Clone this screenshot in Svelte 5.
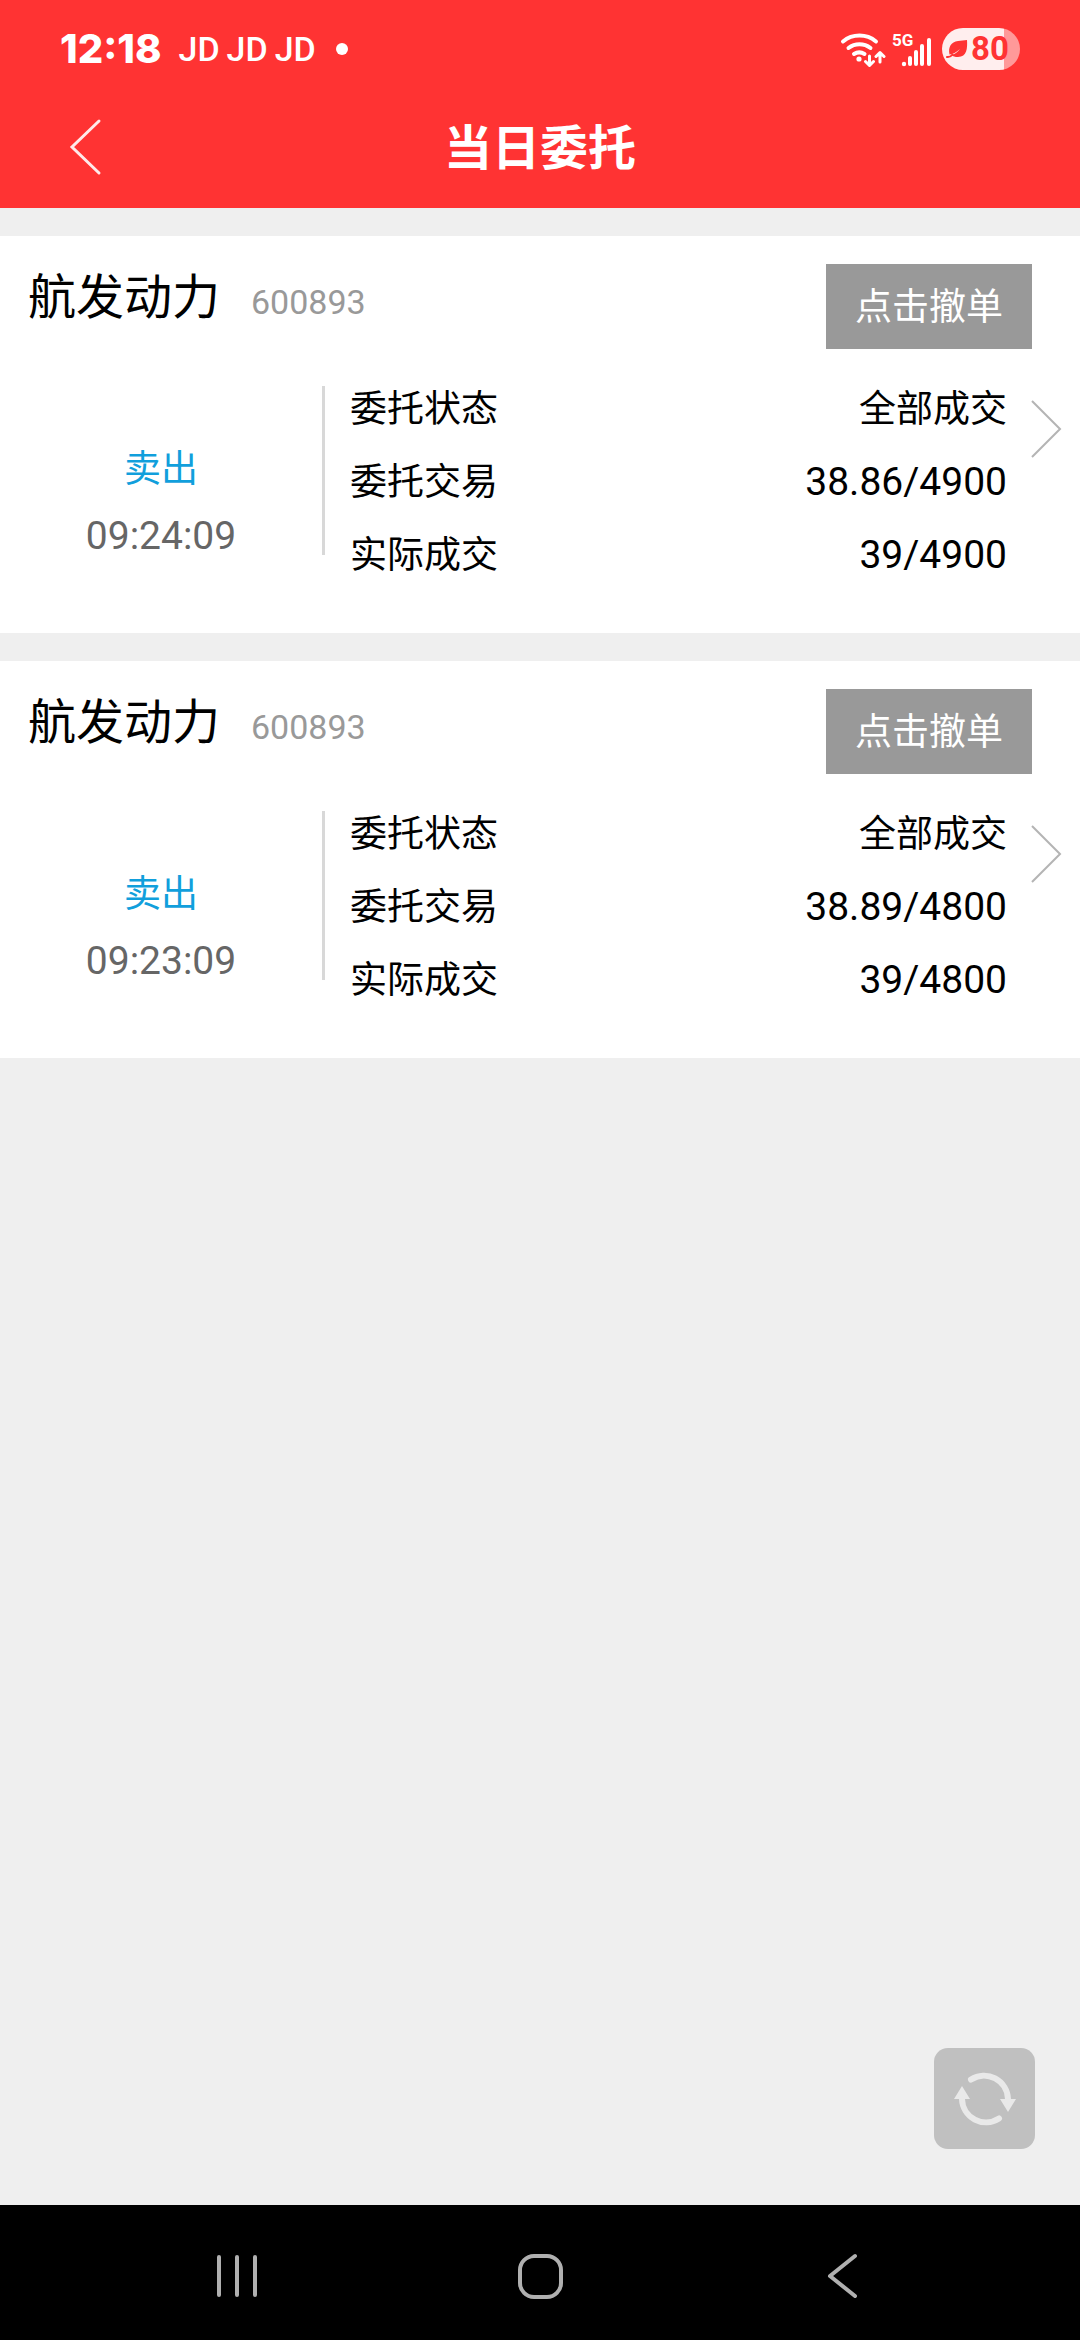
<script>
  const orders = [
    { name: '航发动力', code: '600893', side: '卖出', time: '09:24:09', status: '全部成交', ordered: '38.86/4900', filled: '39/4900' },
    { name: '航发动力', code: '600893', side: '卖出', time: '09:23:09', status: '全部成交', ordered: '38.89/4800', filled: '39/4800' }
  ];
  const notices = [1, 2, 3];
</script>

<div class="screen">
  <header>
    <div class="status">
      <span class="clock">12:18</span>
      <span class="notices">
        {#each notices as n (n)}<span>JD</span>{/each}
      </span>
      <span class="dot"></span>
      <div class="indicators">
        <svg class="wifi" width="46" height="42" viewBox="0 0 46 42" fill="none" stroke="#fff" stroke-width="4" stroke-linecap="round" aria-hidden="true">
          <path d="M3 13.500a26 26 0 0 1 33 0M8.500 20a18 18 0 0 1 22 0M14 26a10 10 0 0 1 10.500 0" />
          <circle cx="19" cy="31" r="2.600" fill="#fff" stroke="none" />
          <path d="M29.500 28v9M25.500 33.500l4 4 4-4M40 34v-9M36 28.500l4-4 4 4" stroke-width="3" stroke-linejoin="round" />
        </svg>
        <div class="signal">
          <span class="network">5G</span>
          <svg width="32" height="30" viewBox="0 0 32 30" fill="#fff" aria-hidden="true">
            <circle cx="4" cy="27" r="2.200" />
            <rect x="8" y="19" width="4" height="10" rx="2" />
            <rect x="14" y="13" width="4" height="16" rx="2" />
            <rect x="20" y="7" width="4" height="22" rx="2" />
            <rect x="27" y="1" width="4" height="28" rx="2" />
          </svg>
        </div>
        <div class="battery">
          <svg width="22" height="20" viewBox="0 0 22 20" aria-hidden="true">
            <path d="M21 1c.5 8 0 17-9 17-3 0-5-.6-6.500-2 3-.8 6-2.500 8.500-6-4 3.500-7 5-10.500 5.500C2 8 5 3 12 2c3-.5 6-.4 9-1z" fill="#f33" />
            <path d="M1 18c2 .4 4-.6 5.500-2.500" fill="none" stroke="#f33" stroke-width="2" stroke-linecap="round" />
          </svg>
          <span>80</span>
        </div>
      </div>
    </div>
    <div class="titlebar">
      <button class="back" aria-label="返回">
        <svg width="34" height="60" viewBox="0 0 34 60" fill="none" stroke="#ffeaea" stroke-width="3" stroke-linecap="round" aria-hidden="true">
          <path d="M31 4L4 30 31 56" />
        </svg>
      </button>
      <h1>当日委托</h1>
    </div>
  </header>

  <main>
    {#each orders as order (order.time)}
      <article>
        <div class="head">
          <h2>{order.name}</h2>
          <span class="code">{order.code}</span>
          <button class="cancel">点击撤单</button>
        </div>
        <div class="body">
          <div class="trade">
            <span class="side">{order.side}</span>
            <time>{order.time}</time>
          </div>
          <dl>
            <div><dt>委托状态</dt><dd class="cjk">{order.status}</dd></div>
            <div><dt>委托交易</dt><dd>{order.ordered}</dd></div>
            <div><dt>实际成交</dt><dd>{order.filled}</dd></div>
          </dl>
          <button class="more" aria-label="查看详情">
            <svg width="32" height="58" viewBox="0 0 32 58" fill="none" stroke="#b4b4b4" stroke-width="2" aria-hidden="true">
              <path d="M2 1l28 28L2 57" />
            </svg>
          </button>
        </div>
      </article>
    {/each}
    <button class="refresh" aria-label="刷新">
      <svg width="64" height="56" viewBox="0 0 64 56" fill="none" stroke="#e9e9e9" stroke-width="6" stroke-linecap="round" aria-hidden="true">
        <path d="M18 8.500A24 24 0 0 1 55 28M46 47.500A24 24 0 0 1 9 28" />
        <path d="M47 28h16l-8 13zM1 28h16L9 15z" fill="#e9e9e9" stroke="none" />
      </svg>
    </button>
  </main>

  <nav>
    <button aria-label="最近任务">
      <svg width="48" height="48" viewBox="0 0 48 48" stroke="#b0b0b0" stroke-width="4" stroke-linecap="round" aria-hidden="true">
        <path d="M6 5v38M24 5v38M42 5v38" />
      </svg>
    </button>
    <button aria-label="主屏幕">
      <svg width="48" height="48" viewBox="0 0 48 48" fill="none" stroke="#b0b0b0" stroke-width="4" aria-hidden="true">
        <rect x="4" y="4" width="41" height="41" rx="14" />
      </svg>
    </button>
    <button aria-label="返回上一页">
      <svg width="48" height="48" viewBox="0 0 48 48" fill="none" stroke="#b0b0b0" stroke-width="4" stroke-linecap="round" stroke-linejoin="round" aria-hidden="true">
        <path d="M36 4L11 24l25 20" />
      </svg>
    </button>
  </nav>
</div>

<style>
  :global(body) {
    margin: 0;
  }
  .screen {
    display: flex;
    flex-direction: column;
    min-height: 100vh;
    background: #efefef;
    color: #000;
    font-family: Roboto, 'Noto Sans CJK SC', sans-serif;
    font-size: 37px;
  }
  svg {
    display: block;
    flex: none;
  }
  button {
    display: flex;
    align-items: center;
    justify-content: center;
    padding: 0;
    border: 0;
    background: none;
    color: inherit;
    font: inherit;
  }
  header {
    background: #f33;
    color: #fff;
  }
  .status {
    display: flex;
    align-items: center;
    box-sizing: border-box;
    height: 86px;
    padding: 12px 60px 0;
  }
  .clock {
    font: 800 40px/40px Inter, sans-serif;
  }
  .notices {
    display: flex;
    gap: 7px;
    margin-left: 17px;
    font: 500 34px/40px Roboto, sans-serif;
  }
  .dot {
    width: 12px;
    height: 12px;
    margin-left: 20px;
    border-radius: 50%;
    background: #fff;
  }
  .indicators {
    display: flex;
    align-items: center;
    margin-left: auto;
  }
  .signal {
    display: flex;
    align-items: flex-end;
    position: relative;
    height: 40px;
    margin-left: 14px;
    padding-bottom: 2px;
    box-sizing: border-box;
  }
  .network {
    position: absolute;
    left: -8px;
    top: 2px;
    font: 700 17px/18px Roboto, sans-serif;
  }
  .battery {
    display: flex;
    align-items: center;
    box-sizing: border-box;
    width: 78px;
    height: 42px;
    margin-left: 10px;
    padding-left: 4px;
    gap: 3px;
    border-radius: 21px;
    background: linear-gradient(90deg, #fee 80%, #f99 80%);
    color: #f33;
    font: 700 33px/42px Roboto, sans-serif;
  }
  .titlebar {
    display: grid;
    grid-template-columns: 1fr auto 1fr;
    align-items: center;
    height: 122px;
  }
  .back {
    justify-self: start;
    margin-left: 68px;
  }
  h1,
  h2 {
    margin: 0;
    font-size: 48px;
    line-height: 68px;
  }
  h1 {
    padding-top: 4px;
    font-weight: 700;
  }
  h2 {
    font-weight: 400;
  }
  main {
    display: flex;
    flex: 1;
    flex-direction: column;
    gap: 28px;
    padding: 28px 0 56px;
  }
  article {
    padding: 28px 0 41px;
    background: #fff;
  }
  .head {
    display: flex;
    align-items: flex-start;
    padding: 0 48px 0 28px;
  }
  .code {
    margin-left: 31px;
    color: #999;
    font-size: 34px;
    line-height: 76px;
  }
  .cancel {
    box-sizing: border-box;
    width: 206px;
    height: 85px;
    margin-left: auto;
    padding-bottom: 6px;
    background: #999;
    color: #fff;
  }
  .body {
    display: flex;
    align-items: flex-start;
    margin-top: 24px;
  }
  .trade {
    display: flex;
    flex: 0 0 322px;
    flex-direction: column;
    align-items: center;
    margin-top: 13px;
    padding-top: 50px;
    height: 119px;
    border-right: 3px solid #d8d8d8;
    line-height: 67px;
  }
  .side {
    color: #119fdc;
  }
  time {
    color: #666;
    font-size: 39px;
  }
  dl {
    flex: 1;
    margin: 0;
    padding-left: 25px;
  }
  dl div {
    display: flex;
    justify-content: space-between;
    line-height: 73px;
  }
  dd {
    margin: 0;
    font-size: 39px;
  }
  dd.cjk {
    font-size: 37px;
  }
  .more {
    margin: 27px 18px 0 23px;
  }
  .refresh {
    align-self: flex-end;
    width: 101px;
    height: 101px;
    margin: auto 45px 0 0;
    border-radius: 14px;
    background: #c0c0c0;
  }
  nav {
    display: flex;
    align-items: center;
    justify-content: space-between;
    height: 135px;
    padding: 6px 213px 0;
    box-sizing: border-box;
    background: #000;
  }
</style>
